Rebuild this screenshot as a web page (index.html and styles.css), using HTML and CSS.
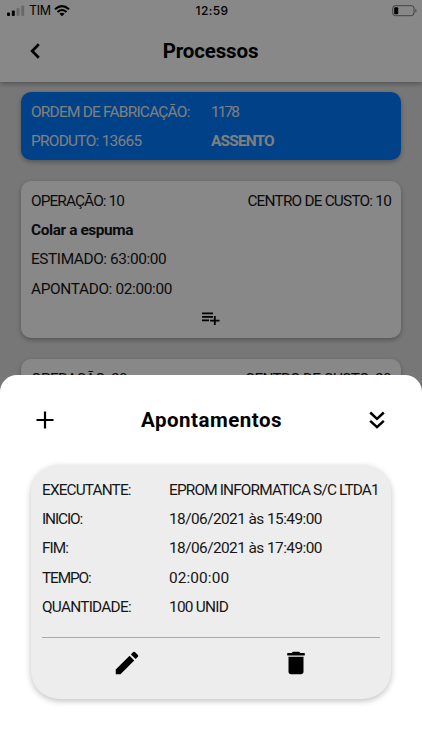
FILE: index.html
```html
<!DOCTYPE html>
<html lang="pt-BR">
<head>
<meta charset="utf-8">
<title>Processos</title>
<link rel="stylesheet" href="styles.css">
</head>
<body>
<div class="app">
  <header class="header">
    <div class="status">
      <div class="carrier">
        <svg width="18" height="12" viewBox="0 0 18 12"><rect x="0" y="7.5" width="3" height="3.5" rx="1"/><rect x="4.8" y="5.5" width="3" height="5.5" rx="1"/><g opacity=".22"><rect x="9.5" y="3" width="3" height="8" rx="1"/><rect x="14.2" y="0.5" width="3" height="10.5" rx="1"/></g></svg>
        <span class="network">TIM</span>
        <svg width="16" height="12" viewBox="0 0 16 12" fill="none" stroke="#000" stroke-width="2.1"><path d="M1 4.3Q8-2 15 4.3M3.5 7Q8 3 12.5 7"/><path d="M5.4 8.7Q8 6.8 10.6 8.7L8 11.3Z" fill="#000" stroke="none"/></svg>
      </div>
      <span class="clock">12:59</span>
      <svg class="battery" width="25" height="12" viewBox="0 0 25 12"><rect x=".7" y=".7" width="21.3" height="10" rx="2.7" fill="none" stroke="#000" stroke-opacity=".5"/><rect x="2.2" y="2.2" width="4" height="7" rx="1"/><path d="M23.3 4v3.6q1.3-.5 1.3-1.8T23.3 4" opacity=".5"/></svg>
    </div>
    <div class="navbar">
      <svg class="back" width="12" height="16" viewBox="0 0 12 16" fill="none" stroke="#000" stroke-width="2.7"><path d="M9.8 1.3 3.2 8l6.600 6.700"/></svg>
      <h1 class="title w-main">Processos</h1>
    </div>
  </header>
  <main class="list">
    <section class="card order">
      <div class="row"><span class="order-label w-order">ORDEM DE FABRICAÇÃO:</span><span class="w-number">1178</span></div>
      <div class="row"><span class="order-label w-product">PRODUTO: 13665</span><b class="w-seat">ASSENTO</b></div>
    </section>
    <section class="card operation">
      <div class="row split"><span class="w-op">OPERAÇÃO: 10</span><span class="w-cost">CENTRO DE CUSTO: 10</span></div>
      <div class="row"><b class="w-name">Colar a espuma</b></div>
      <div class="row"><span class="w-est">ESTIMADO: 63:00:00</span></div>
      <div class="row"><span class="w-apt">APONTADO: 02:00:00</span></div>
      <svg class="add-list" width="18" height="13" viewBox="0 0 18 13"><path d="M0 .5h11v1.800H0zM0 4h11v1.800H0zM0 7.500h7v1.800H0zM11.900 4h1.800v3.700h3.800v1.800h-3.800v3.500h-1.800V9.500H8.100V7.700h3.800z"/></svg>
    </section>
    <section class="card operation">
      <div class="row split"><span class="w-op-next">OPERAÇÃO: 20</span><span class="w-cost-next">CENTRO DE CUSTO: 20</span></div>
    </section>
  </main>
</div>
<div class="backdrop"></div>
<section class="sheet">
  <div class="sheet-head">
    <svg width="18" height="18" viewBox="0 0 18 18" fill="none" stroke="#000" stroke-width="2.2"><path d="M9 .5v17M.5 9h17"/></svg>
    <h2 class="title w-sheet">Apontamentos</h2>
    <svg width="16" height="18" viewBox="0 0 16 18" fill="none" stroke="#000" stroke-width="2.5"><path d="m1.200 1.500 6.800 6.300 6.800-6.300M1.200 9.800 8 16.100l6.800-6.300"/></svg>
  </div>
  <article class="entry">
    <dl class="fields">
      <dt class="w-exec">EXECUTANTE:</dt><dd class="w-company">EPROM INFORMATICA S/C LTDA1</dd>
      <dt class="w-start">INICIO:</dt><dd class="w-date">18/06/2021 às 15:49:00</dd>
      <dt class="w-end">FIM:</dt><dd class="w-date">18/06/2021 às 17:49:00</dd>
      <dt class="w-time">TEMPO:</dt><dd class="w-hours">02:00:00</dd>
      <dt class="w-qty">QUANTIDADE:</dt><dd class="w-unit">100 UNID</dd>
    </dl>
    <div class="actions">
      <svg width="30" height="30" viewBox="0 0 24 24"><path d="M3 17.250V21h3.750L17.810 9.940l-3.750-3.750zM20.710 7.040a1 1 0 0 0 0-1.410l-2.340-2.340a1 1 0 0 0-1.410 0l-1.830 1.830 3.750 3.750z"/></svg>
      <svg width="30" height="30" viewBox="0 0 24 24"><path d="M6 19c0 1.100.9 2 2 2h8c1.100 0 2-.9 2-2V7H6zM19 4h-3.500l-1-1h-5l-1 1H5v2h14z"/></svg>
    </div>
  </article>
</section>
</body>
</html>
```
FILE: styles.css
```css
* { box-sizing: border-box; }
body { margin: 0; width: 422px; height: 750px; overflow: hidden; position: relative; font: 15.4px/29.2px Roboto, "Liberation Sans", sans-serif; color: #161616; }
svg { display: block; flex: none; }
.app { height: 750px; background: #e0e0e0; overflow: hidden; }
.header { height: 82px; background: #fff; box-shadow: 0 2px 5px rgba(0,0,0,.3); position: relative; }
.status { height: 22px; display: grid; grid-template-columns: 1fr auto 1fr; align-items: center; padding: 0 5px 0 7px; color: #000; line-height: 22px; }
.carrier { display: flex; align-items: center; gap: 4px; }
.network { font: 12.5px/22px Inter, sans-serif; width: 21px; letter-spacing: -.3px; }
.clock { font: 500 12px/22px Inter, sans-serif; letter-spacing: .4px; }
.battery { justify-self: end; }
.navbar { height: 58px; display: grid; grid-template-columns: 60px 1fr 60px; align-items: center; }
.back { margin-left: 29px; }
.title { margin: 0; text-align: center; font-size: 20.5px; line-height: 30px; font-weight: 700; color: #000; }
.navbar .title { margin-left: -1px; }
.list { padding: 10px 21px 0; display: flex; flex-direction: column; gap: 21px; }
.card { border-radius: 10px; padding: 6px 10px 4px; background: #fff; box-shadow: 0 2px 5px rgba(0,0,0,.3); }
.order { height: 68px; background: #007bff; color: #eee; }
.row { display: flex; height: 29.2px; white-space: nowrap; }
.split { justify-content: space-between; }
.order-label { width: 180px; }
.operation { height: 157px; flex: none; }
.add-list { margin: 8px auto 0; }
.backdrop { position: absolute; inset: 0; background: rgba(0,0,0,.467); }
.sheet { position: absolute; left: 0; right: 0; bottom: 0; height: 375px; background: #fff; border-radius: 17px 17px 0 0; padding: 0 31px; }
.sheet-head { height: 90px; display: flex; align-items: center; justify-content: space-between; padding: 0 6px 0 5px; }
.entry { height: 234px; border-radius: 28px; background: #ededed; padding: 11px 11px 0; box-shadow: 0 2px 6px rgba(0,0,0,.25); }
.fields { margin: 0; display: grid; grid-template-columns: 127px 1fr; grid-auto-rows: 29.2px; height: 162px; border-bottom: 1px solid #aaa; white-space: nowrap; }
.fields dd { margin: 0; }
.actions { display: grid; grid-template-columns: 1fr 1fr; justify-items: center; padding-top: 10px; }

/* Tracking for the condensed look of each label */
.w-main { letter-spacing: -.15px; }
.w-sheet { letter-spacing: .5px; }
.w-order { letter-spacing: -.75px; }
.w-number { letter-spacing: -1.9px; }
.w-product { letter-spacing: -.7px; }
.w-seat { letter-spacing: -.8px; }
.w-op { letter-spacing: -.9px; }
.w-op-next { letter-spacing: -.65px; }
.w-cost { letter-spacing: -.8px; }
.w-cost-next { letter-spacing: -.68px; }
.w-name, .w-est { letter-spacing: -.4px; }
.w-apt { letter-spacing: -.35px; }
.w-exec { letter-spacing: -.87px; }
.w-company { letter-spacing: -.85px; }
.w-start { letter-spacing: -1.1px; }
.w-date { letter-spacing: -.56px; }
.w-end { letter-spacing: -1px; }
.w-time { letter-spacing: -1.15px; }
.w-hours { letter-spacing: .1px; }
.w-qty, .w-unit { letter-spacing: -.75px; }
```
